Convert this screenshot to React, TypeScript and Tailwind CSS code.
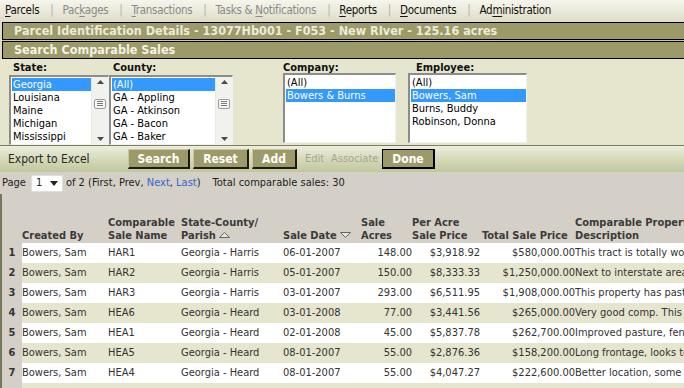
import React from "react";

const F = "font-['DejaVu_Sans_Condensed','DejaVu_Sans',sans-serif]";

const rows: string[][] = [
  ["Bowers, Sam", "HAR1", "Georgia - Harris", "06-01-2007", "148.00", "$3,918.92", "$580,000.00", "This tract is totally wooded"],
  ["Bowers, Sam", "HAR2", "Georgia - Harris", "05-01-2007", "150.00", "$8,333.33", "$1,250,000.00", "Next to interstate area"],
  ["Bowers, Sam", "HAR3", "Georgia - Harris", "03-01-2007", "293.00", "$6,511.95", "$1,908,000.00", "This property has pasture"],
  ["Bowers, Sam", "HEA6", "Georgia - Heard", "03-01-2008", "77.00", "$3,441.56", "$265,000.00", "Very good comp. This is"],
  ["Bowers, Sam", "HEA1", "Georgia - Heard", "02-01-2008", "45.00", "$5,837.78", "$262,700.00", "Improved pasture, fenced"],
  ["Bowers, Sam", "HEA5", "Georgia - Heard", "08-01-2007", "55.00", "$2,876.36", "$158,200.00", "Long frontage, looks to"],
  ["Bowers, Sam", "HEA4", "Georgia - Heard", "08-01-2007", "55.00", "$4,047.27", "$222,600.00", "Better location, some of"],
  ["Bowers, Sam", "HEA3", "Georgia - Heard", "07-01-2007", "60.00", "$3,500.00", "$210,000.00", "Good road frontage"],
];

function Scrollbar() {
  return (
    <div className="w-[17px] h-full bg-[#f1f1ed] flex flex-col items-center justify-between py-[3px] border-l border-[#e8e8e4]">
      <svg width="7" height="4" viewBox="0 0 7 4"><path d="M0 4 L3.5 0 L7 4 Z" fill="#4a4a4a" /></svg>
      <div className="w-[12px] h-[10px] -mt-[14px] rounded-[2px] border border-[#9a9a9a] bg-[#f8f8f8] flex flex-col items-center justify-center gap-[1px]">
        <div className="w-[6px] h-[1px] bg-[#777]" />
        <div className="w-[6px] h-[1px] bg-[#777]" />
        <div className="w-[6px] h-[1px] bg-[#777]" />
      </div>
      <svg width="7" height="4" viewBox="0 0 7 4"><path d="M0 0 L3.5 4 L7 0 Z" fill="#4a4a4a" /></svg>
    </div>
  );
}

function ListBox({ items, selected, width, scroll }: { items: string[]; selected: number; width: string; scroll?: boolean }) {
  return (
    <div className={`${width} h-[70px] bg-white border-t-2 border-l-2 border-t-[#8c8c8c] border-l-[#8c8c8c] border-b border-r border-b-[#f2f2f2] border-r-[#f2f2f2] flex overflow-hidden`}>
      <div className="flex-1 pt-[1px] pl-[1px]">
        {items.map((it, i) => (
          <div
            key={i}
            className={`h-[13px] leading-[13px] text-[11px] pl-[1px] whitespace-nowrap ${i === selected ? "bg-[#3399ff] text-white" : "text-black"}`}
          >
            {it}
          </div>
        ))}
      </div>
      {scroll && <Scrollbar />}
    </div>
  );
}

function Btn({ label, w, done }: { label: string; w: string; done?: boolean }) {
  return (
    <div
      className={`${w} h-[20px] bg-[#9d9a69] text-white font-bold text-[12px] flex items-center justify-center ${
        done ? "border border-black border-r-2 border-b-2" : "border-t border-l border-t-[#c8c6a6] border-l-[#c8c6a6] border-r-2 border-b-2 border-r-[#1a1a10] border-b-[#1a1a10]"
      }`}
    >
      {label}
    </div>
  );
}

function MenuItem({ pre, u, post, active }: { pre: string; u: string; post: string; active?: boolean }) {
  return (
    <span className={active ? "text-[#111]" : "text-[#8a8a8a]"}>
      {pre}
      <span className="underline underline-offset-2">{u}</span>
      {post}
    </span>
  );
}

function Sep() {
  return <span className="text-[#b0b0a8] ml-[11px] mr-[9px]">|</span>;
}

export default function App() {
  return (
    <div className={`${F} w-[684px] h-[388px] overflow-hidden bg-[#d4d0c8] text-[#222]`}>
      {/* menu */}
      <div className="h-[22px] bg-gradient-to-b from-[#f6f6ee] to-[#dedcc6] flex items-center pl-[5px] text-[11.5px] tracking-[-0.3px]">
        <MenuItem pre="" u="P" post="arcels" active />
        <Sep />
        <MenuItem pre="Pac" u="k" post="ages" />
        <Sep />
        <MenuItem pre="" u="T" post="ransactions" />
        <Sep />
        <MenuItem pre="Tasks & " u="N" post="otifications" />
        <Sep />
        <MenuItem pre="" u="R" post="eports" active />
        <Sep />
        <MenuItem pre="" u="D" post="ocuments" active />
        <Sep />
        <MenuItem pre="Ad" u="m" post="inistration" active />
      </div>
      {/* title bars */}
      <div className="bg-[#dedcc6] pl-[2px]">
        <div className="h-[18px] bg-[#9d9a69] border-t border-b border-l border-black flex items-center pl-[11px] text-[12.5px] font-bold text-[#ecebdc] whitespace-nowrap">
          Parcel Identification Details - 13077Hb001 - F053 - New RIver - 125.16 acres
        </div>
        <div className="h-[1px] bg-[#c9c7a8]" />
        <div className="h-[18px] bg-[#9d9a69] border-t border-b border-l border-black flex items-center pl-[11px] text-[12.5px] font-bold text-[#f4f3e6]">
          Search Comparable Sales
        </div>
      </div>
      {/* filters */}
      <div className="h-[87px] bg-[#e6e5cd] border-b border-[#7d7c5e] flex items-start pt-[2px]">
        <div className="ml-[9px] w-[100px]">
          <div className="h-[14px] leading-[13px] pl-[4px] text-[11px] font-bold text-[#111]">State:</div>
          <ListBox width="w-[100px]" items={["Georgia", "Louisiana", "Maine", "Michigan", "Mississippi"]} selected={0} scroll />
        </div>
        <div className="w-[124px]">
          <div className="h-[14px] leading-[13px] pl-[4px] text-[11px] font-bold text-[#111]">County:</div>
          <ListBox width="w-[124px]" items={["(All)", "GA - Appling", "GA - Atkinson", "GA - Bacon", "GA - Baker"]} selected={0} scroll />
        </div>
        <div className="ml-[50px] w-[113px]">
          <div className="h-[12px] leading-[13px] text-[11px] font-bold text-[#111]">Company:</div>
          <ListBox width="w-[113px]" items={["(All)", "Bowers & Burns"]} selected={1} />
        </div>
        <div className="ml-[12px] w-[119px]">
          <div className="h-[12px] leading-[13px] pl-[8px] text-[11px] font-bold text-[#111]">Employee:</div>
          <ListBox width="w-[119px]" items={["(All)", "Bowers, Sam", "Burns, Buddy", "Robinson, Donna"]} selected={1} />
        </div>
      </div>
      {/* toolbar */}
      <div className="h-[26px] bg-gradient-to-b from-[#eceedf] via-[#d6dab9] to-[#c1c79c] flex items-center text-[12px]">
        <span className="ml-[8px] w-[120px] text-[#2a2a2a]">Export to Excel</span>
        <Btn label="Search" w="w-[62px]" />
        <div className="w-[3px]" />
        <Btn label="Reset" w="w-[56px]" />
        <div className="w-[3px]" />
        <Btn label="Add" w="w-[45px]" />
        <span className="ml-[8px] w-[19px] text-[11px] text-[#a5a595]">Edit</span>
        <span className="ml-[7px] w-[47px] text-[11px] text-[#a5a595]">Associate</span>
        <div className="w-[4px]" />
        <Btn label="Done" w="w-[53px]" done />
      </div>
      {/* pager */}
      <div className="h-[22px] flex items-center text-[11px] text-[#222] pl-[2px]">
        <span>Page</span>
        <div className="ml-[5px] w-[32px] h-[17px] bg-white border border-[#e0ded8] flex items-center justify-between px-[4px]">
          <span>1</span>
          <svg width="8" height="5" viewBox="0 0 8 5"><path d="M0 0 L4 5 L8 0 Z" fill="#222" /></svg>
        </div>
        <span className="ml-[3px]">
          of 2 (First, Prev, <span className="text-[#3366cc]">Next</span>, <span className="text-[#3366cc]">Last</span>)
        </span>
        <span className="ml-[12px]">Total comparable sales: 30</span>
      </div>
      {/* table */}
      <div className="border-l-2 border-[#767659] h-[300px]">
        <table className="table-fixed border-collapse w-[820px] text-[11px]">
          <colgroup>
            <col className="w-[20px]" />
            <col className="w-[86px]" />
            <col className="w-[73px]" />
            <col className="w-[102px]" />
            <col className="w-[78px]" />
            <col className="w-[51px]" />
            <col className="w-[70px]" />
            <col className="w-[93px]" />
            <col className="w-[247px]" />
          </colgroup>
          <thead>
            <tr className="h-[49px] align-bottom font-bold text-[#3a3a3a] leading-[13px]">
              <th />
              <th className="text-left font-bold pb-[1px]">Created By</th>
              <th className="text-left font-bold pb-[1px]">Comparable<br />Sale Name</th>
              <th className="text-left font-bold pb-[1px] whitespace-nowrap">
                State-County/<br />Parish{" "}
                <svg className="inline-block align-baseline mb-[1px]" width="11" height="6" viewBox="0 0 11 6"><path d="M0.5 5.5 L5.5 0.5 L10.5 5.5 Z" fill="#e4e4e4" stroke="#666" /></svg>
              </th>
              <th className="text-left font-bold pb-[1px] whitespace-nowrap">
                Sale Date{" "}
                <svg className="inline-block align-baseline mb-[1px]" width="11" height="6" viewBox="0 0 11 6"><path d="M0.5 0.5 L5.5 5.5 L10.5 0.5 Z" fill="#e4e4e4" stroke="#666" /></svg>
              </th>
              <th className="text-left font-bold pb-[1px]">Sale<br />Acres</th>
              <th className="text-left font-bold pb-[1px]">Per Acre<br />Sale Price</th>
              <th className="text-left font-bold pb-[1px] whitespace-nowrap">Total Sale Price</th>
              <th className="text-left font-bold pb-[1px] whitespace-nowrap">Comparable Property<br />Description</th>
            </tr>
          </thead>
          <tbody>
            {rows.map((r, i) => (
              <tr key={i} className="h-[20px] text-[#333]">
                <td className="bg-[#d4d0c8] text-center font-bold text-[#333]">{i + 1}</td>
                {r.map((c, j) => (
                  <td
                    key={j}
                    className={`${i % 2 === 0 ? "bg-white" : "bg-[#e6e5cd]"} whitespace-nowrap overflow-hidden ${
                      j >= 4 && j <= 6 ? "text-right" : "text-left"
                    } ${j === 5 ? "pr-[2px]" : ""}`}
                  >
                    {c}
                  </td>
                ))}
              </tr>
            ))}
          </tbody>
        </table>
      </div>
    </div>
  );
}
